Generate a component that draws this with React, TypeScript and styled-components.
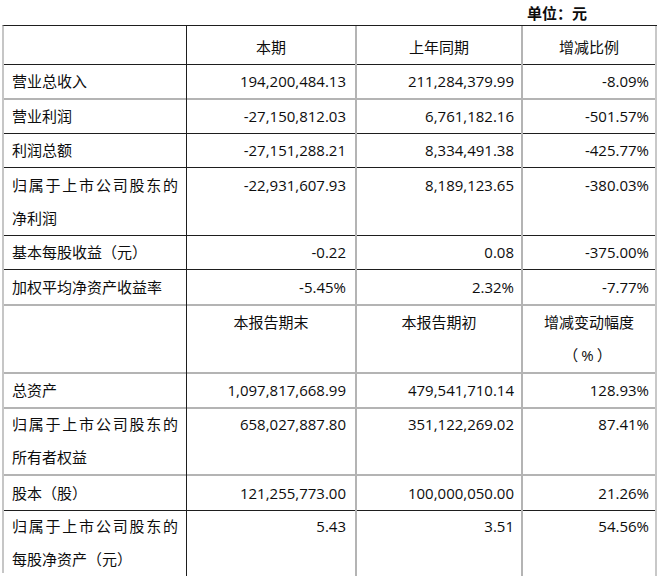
import React from 'react';
import styled, { createGlobalStyle } from 'styled-components';

const GlobalStyle = createGlobalStyle`
  *, *::before, *::after { box-sizing: border-box; }
  html, body { margin: 0; padding: 0; background: #ffffff; }
  body {
    font-family: "Open Sans", "Noto Sans CJK SC", sans-serif;
    color: #0d0d0d;
  }
`;

const DARK = '#1e1e1e';
const GRAY = '#b4b4b4';

const Page = styled.div`
  width: 661px;
  height: 576px;
  overflow: hidden;
`;

const UnitBar = styled.div`
  height: 25px;
  display: flex;
  justify-content: flex-end;
  align-items: center;
  padding-right: 74px;
  font-family: "Noto Sans CJK SC", sans-serif;
  font-size: 15px;
  font-weight: 700;
  line-height: 25px;
`;

const Table = styled.div`
  margin-left: 2px;
  width: 655px;
  display: flex;
  flex-direction: column;
  border-left: 2px solid #c6c6c6;
  border-top: 1px solid ${DARK};
`;

const Row = styled.div<{ $h: number }>`
  display: grid;
  grid-template-columns: 183px 170px 166px 134px;
  height: ${(p) => p.$h}px;
`;

type Edge = 'dark' | 'gray' | 'light';

const edgeCss = (e: Edge) =>
  e === 'dark' ? `1px solid ${DARK}` : e === 'gray' ? `2px solid ${GRAY}` : `2px solid #c8c8c8`;

const Cell = styled.div<{
  $align: 'left' | 'right' | 'center';
  $pl: number;
  $pr: number;
  $right: Edge;
  $bottom: Edge;
}>`
  padding: 5px ${(p) => p.$pr}px 0 ${(p) => p.$pl}px;
  font-size: 15px;
  line-height: 33px;
  text-align: ${(p) => p.$align};
  white-space: nowrap;
  text-spacing-trim: space-all;
  border-right: ${(p) => edgeCss(p.$right)};
  border-bottom: ${(p) => edgeCss(p.$bottom)};
`;

const Line = styled.span<{ $justify?: boolean; $wide?: boolean }>`
  display: block;
  text-align: ${(p) => (p.$justify ? 'justify' : 'inherit')};
  text-align-last: ${(p) => (p.$justify ? 'justify' : 'auto')};
  letter-spacing: ${(p) => (p.$wide ? '3px' : 'normal')};
`;

type RowData = {
  head?: boolean;
  label: string[];
  cells: string[][];
  h: number;
  bottom: Edge;
};

const rows: RowData[] = [
  { head: true, label: [], cells: [['本期'], ['上年同期'], ['增减比例']], h: 34, bottom: 'dark' },
  { label: ['营业总收入'], cells: [['194,200,484.13'], ['211,284,379.99'], ['-8.09%']], h: 35, bottom: 'gray' },
  { label: ['营业利润'], cells: [['-27,150,812.03'], ['6,761,182.16'], ['-501.57%']], h: 34, bottom: 'dark' },
  { label: ['利润总额'], cells: [['-27,151,288.21'], ['8,334,491.38'], ['-425.77%']], h: 35, bottom: 'dark' },
  {
    label: ['归属于上市公司股东的', '净利润'],
    cells: [['-22,931,607.93'], ['8,189,123.65'], ['-380.03%']],
    h: 67,
    bottom: 'dark',
  },
  { label: ['基本每股收益（元）'], cells: [['-0.22'], ['0.08'], ['-375.00%']], h: 35, bottom: 'dark' },
  { label: ['加权平均净资产收益率'], cells: [['-5.45%'], ['2.32%'], ['-7.77%']], h: 35, bottom: 'gray' },
  {
    head: true,
    label: [],
    cells: [['本报告期末'], ['本报告期初'], ['增减变动幅度', '（%）']],
    h: 68,
    bottom: 'gray',
  },
  { label: ['总资产'], cells: [['1,097,817,668.99'], ['479,541,710.14'], ['128.93%']], h: 34, bottom: 'gray' },
  {
    label: ['归属于上市公司股东的', '所有者权益'],
    cells: [['658,027,887.80'], ['351,122,269.02'], ['87.41%']],
    h: 69,
    bottom: 'gray',
  },
  { label: ['股本（股）'], cells: [['121,255,773.00'], ['100,000,050.00'], ['21.26%']], h: 33, bottom: 'dark' },
  {
    label: ['归属于上市公司股东的', '每股净资产（元）'],
    cells: [['5.43'], ['3.51'], ['54.56%']],
    h: 68,
    bottom: 'dark',
  },
];

const colRight: Edge[] = ['gray', 'gray', 'light'];
const colPr = [9, 7, 6];

export default function App() {
  return (
    <Page>
      <GlobalStyle />
      <UnitBar>单位：元</UnitBar>
      <Table>
        {rows.map((r, i) => (
          <Row key={i} $h={r.h}>
            <Cell $align="left" $pl={8} $pr={8} $right="dark" $bottom={r.bottom}>
              {r.label.map((l, j) => (
                <Line key={j} $justify={r.label.length > 1 && j === 0}>
                  {l}
                </Line>
              ))}
            </Cell>
            {r.cells.map((c, k) => (
              <Cell
                key={k}
                $align={r.head ? 'center' : 'right'}
                $pl={r.head ? 0 : 4}
                $pr={r.head ? 0 : colPr[k]}
                $right={colRight[k]}
                $bottom={r.bottom}
              >
                {c.map((l, j) => (
                  <Line key={j} $wide={l === '（%）'}>
                    {l}
                  </Line>
                ))}
              </Cell>
            ))}
          </Row>
        ))}
      </Table>
    </Page>
  );
}
